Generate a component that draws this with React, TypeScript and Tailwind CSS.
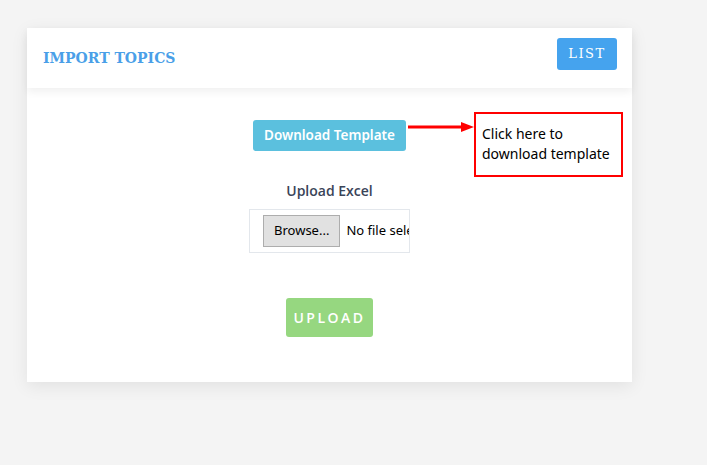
import React from 'react';

const App: React.FC = () => {
  return (
    <div className="min-h-[465px] w-full bg-[#f4f4f4] pt-[28px] pl-[27px]" style={{ fontFamily: '"Open Sans", "Noto Sans", sans-serif' }}>
      <div className="w-[605px] h-[354px] bg-white shadow-[0_4px_16px_rgba(0,0,0,0.08)]">
        {/* Header */}
        <div className="h-[60px] flex items-center justify-between pl-[16px] pr-[15px] shadow-[0_4px_8px_rgba(0,0,0,0.06)]">
          <h1 className="text-[14px] font-bold text-[#4a9fe8] pt-[1px]" style={{ fontFamily: '"DejaVu Serif", serif' }}>
            IMPORT TOPICS
          </h1>
          <button className="h-[32px] w-[60px] rounded-[3px] bg-[#45a3ee] text-white text-[13px] tracking-[1.5px] mb-[8px]" style={{ fontFamily: '"DejaVu Serif", serif' }}>
            LIST
          </button>
        </div>

        {/* Body */}
        <div className="flex flex-col items-center">
          <div className="relative mt-[32px]">
            <button className="h-[31px] w-[153px] rounded-[3px] bg-[#5bc0de] text-white text-[13.5px] font-semibold" style={{ fontFamily: '"Noto Sans", sans-serif' }}>
              Download Template
            </button>
            {/* callout */}
            <div className="absolute left-full top-[-8px] flex items-start">
              <svg width="66" height="10" viewBox="0 0 66 10" className="mt-[10px] ml-[2px]">
                <line x1="0" y1="5" x2="56" y2="5" stroke="#ff0000" strokeWidth="3" />
                <polygon points="53,0 66,5 53,10" fill="#ff0000" />
              </svg>
              <div className="w-[149px] h-[65px] border-2 border-[#ff0000] pl-[6px] pt-[10px] text-[14px] leading-[20px] text-black whitespace-nowrap" style={{ fontFamily: '"Noto Sans", sans-serif' }}>
                Click here to
                <br />
                download template
              </div>
            </div>
          </div>

          <div className="mt-[30px] text-[14px] leading-[20px] font-semibold text-[#3a4458]">Upload Excel</div>

          <div className="mt-[8px] w-[161px] h-[44px] border border-[#e3e7ec] flex items-center pl-[13px] overflow-hidden whitespace-nowrap">
            <span className="h-[32px] px-[10px] flex items-center border border-[#adadad] bg-[#e1e1e1] text-[13px] text-black" style={{ fontFamily: '"Noto Sans", sans-serif' }}>
              Browse...
            </span>
            <span className="ml-[6px] text-[13px] text-black" style={{ fontFamily: '"Noto Sans", sans-serif' }}>No file selected.</span>
          </div>

          <button className="mt-[45px] h-[39px] w-[87px] rounded-[3px] bg-[#96d780] text-white text-[14px] font-semibold tracking-[2.5px]">
            UPLOAD
          </button>
        </div>
      </div>
    </div>
  );
};

export default App;
